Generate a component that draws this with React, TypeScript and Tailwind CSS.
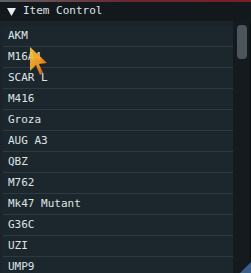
import React from "react";

const items = [
  "AKM",
  "M16A4",
  "SCAR L",
  "M416",
  "Groza",
  "AUG A3",
  "QBZ",
  "M762",
  "Mk47 Mutant",
  "G36C",
  "UZI",
  "UMP9",
];

function Cursor() {
  return (
    <svg className="absolute left-[28px] top-[46px]" width="20" height="30" viewBox="0 0 20 30">
      <defs>
        <linearGradient id="cg" x1="0" y1="0" x2="1" y2="1">
          <stop offset="0" stopColor="#ffd23a" />
          <stop offset="0.6" stopColor="#ff9a1c" />
          <stop offset="1" stopColor="#e2452a" />
        </linearGradient>
      </defs>
      <path d="M2 1 L2 25 L8 19 L12 29 L15 27 L11 18 L19 17 Z" fill="url(#cg)" opacity="0.9" />
    </svg>
  );
}

export default function App() {
  return (
    <div className="relative w-[251px] h-[273px] overflow-hidden bg-[#161d22] font-['DejaVu_Sans_Mono',monospace] text-[11px] text-[#dfe3e6]">
      <div className="h-[2px] bg-gradient-to-r from-[#5c6268] via-[#6a2630] to-[#7c1d27]" />
      <div className="h-[19px] flex items-center gap-[7px] pl-[7px] bg-[#12181c]">
        <svg width="9" height="8" viewBox="0 0 9 8">
          <path d="M0 0 L9 0 L4.5 8 Z" fill="#e8ecee" />
        </svg>
        <span>Item Control</span>
      </div>
      <div className="flex h-[252px]">
        <div className="w-[233px] pl-[3px] pt-[5px] bg-[#1a242a]">
          {items.map((name) => (
            <div
              key={name}
              className="h-[21px] flex items-center pl-[5px] border-b border-[#2d3a41] bg-[#1c272d]"
            >
              {name}
            </div>
          ))}
        </div>
        <div className="w-[16px] pl-[4px] pt-[4px] bg-[#141a1e]">
          <div className="w-[10px] h-[34px] rounded-[4px] bg-[#4a555c]" />
        </div>
        <div className="flex-1 bg-[#0f1417]" />
      </div>
      <div className="absolute right-0 bottom-0 w-0 h-0 border-l-[11px] border-l-transparent border-b-[11px] border-b-[#3b5f86]" />
      <Cursor />
    </div>
  );
}
